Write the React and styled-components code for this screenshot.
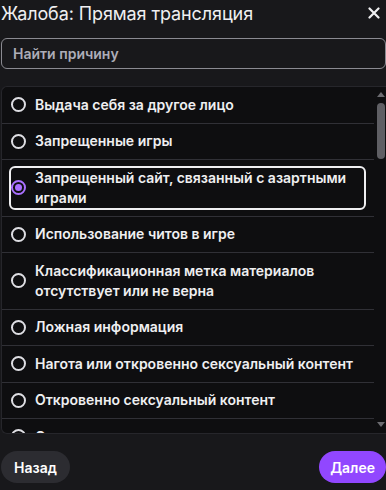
import React from "react";
import styled, { createGlobalStyle } from "styled-components";

const Global = createGlobalStyle`
  html, body { margin: 0; padding: 0; background: #18181b; overflow: hidden; }
  body { font-family: Inter, "Noto Sans", "Liberation Sans", sans-serif; color: #efeff1; }
  * { box-sizing: border-box; }
`;

const Dialog = styled.div`
  width: 386px;
  height: 490px;
  padding: 0 0 0 1px;
  display: flex;
  flex-direction: column;
  background: #18181b;
`;

const Header = styled.div`
  height: 26px;
  display: flex;
  align-items: center;
  justify-content: space-between;
  padding-right: 4px;
`;

const Title = styled.h2`
  margin: 0;
  font-size: 18px;
  font-weight: 400;
  color: #efeff1;
  letter-spacing: -0.1px;
`;

const CloseBtn = styled.button`
  width: 16px;
  height: 16px;
  padding: 0;
  border: 0;
  background: none;
  display: flex;
  align-items: center;
  justify-content: center;
  color: #efeff1;
`;

const Search = styled.input`
  margin-top: 12px;
  height: 31px;
  width: 100%;
  border: 1px solid #8a8a91;
  border-radius: 6px;
  background: #18181b;
  padding: 0 11px;
  font-family: inherit;
  font-size: 14px;
  font-weight: 600;
  color: #efeff1;
  outline: none;
  &::placeholder { color: #adadb8; }
`;

const List = styled.div`
  margin-top: 17px;
  height: 348px;
  display: flex;
  background: #0e0e10;
  border: 1px solid #26262b;
  border-right: 0;
  border-radius: 6px 0 0 6px;
  overflow: hidden;
`;

const Items = styled.div`
  flex: 1;
  overflow: hidden;
`;

const Row = styled.div`
  padding: 5.5px 8px 6px 7px;
  border-bottom: 1px solid #303036;
`;

const Label = styled.label`
  display: flex;
  align-items: center;
  gap: 9px;
  border: 2px solid ${(p) => (p.$selected ? "#efeff1" : "transparent")};
  border-radius: 6px;
  font-size: 14px;
  font-weight: 600;
  line-height: 20px;
  color: #efeff1;
`;

const Radio = styled.span`
  flex: none;
  width: 15px;
  height: 15px;
  border-radius: 50%;
  border: 2px solid ${(p) => (p.$checked ? "#a970ff" : "#dedee3")};
  display: flex;
  align-items: center;
  justify-content: center;
  &::after {
    content: "";
    width: 7px;
    height: 7px;
    border-radius: 50%;
    background: ${(p) => (p.$checked ? "#a970ff" : "transparent")};
  }
`;

const Track = styled.div`
  width: 12px;
  flex: none;
  display: flex;
  flex-direction: column;
  align-items: center;
  padding: 5px 0 6px 1px;
`;

const Arrow = styled.div`
  width: 0;
  height: 0;
  border-left: 4px solid transparent;
  border-right: 4px solid transparent;
  ${(p) =>
    p.$down
      ? "border-top: 5px solid #6b6b70;"
      : "border-bottom: 5px solid #6b6b70;"}
`;

const Thumb = styled.div`
  margin-top: 6px;
  width: 8px;
  height: 56px;
  border-radius: 4px;
  background: #5f5f64;
`;

const Spacer = styled.div`
  flex: 1;
`;

const Footer = styled.div`
  margin-top: 17px;
  display: flex;
  justify-content: space-between;
`;

const Button = styled.button`
  height: 32px;
  padding: 0 ${(p) => (p.$primary ? "11px" : "13px")};
  border: 0;
  border-radius: 16px;
  background: ${(p) => (p.$primary ? "#9147ff" : "#2c2c31")};
  color: #fff;
  font-family: inherit;
  font-size: 14px;
  font-weight: 600;
  white-space: nowrap;
`;

const reasons = [
  "Выдача себя за другое лицо",
  "Запрещенные игры",
  "Запрещенный сайт, связанный с азартными играми",
  "Использование читов в игре",
  "Классификационная метка материалов отсутствует или не верна",
  "Ложная информация",
  "Нагота или откровенно сексуальный контент",
  "Откровенно сексуальный контент",
  "Сексуальное насилие",
  "Спам",
];

export default function App() {
  const selected = 2;
  return (
    <>
      <Global />
      <Dialog>
        <Header>
          <Title>Жалоба: Прямая трансляция</Title>
          <CloseBtn aria-label="Закрыть">
            <svg width="12" height="12" viewBox="0 0 12 12">
              <path d="M1.5 1.5 L10.5 10.5 M10.5 1.5 L1.5 10.5" stroke="#efeff1" strokeWidth="2.2" strokeLinecap="round" />
            </svg>
          </CloseBtn>
        </Header>
        <Search placeholder="Найти причину" />
        <List>
          <Items>
            {reasons.map((r, i) => (
              <Row key={r}>
                <Label $selected={i === selected}>
                  <Radio $checked={i === selected} />
                  <span>{r}</span>
                </Label>
              </Row>
            ))}
          </Items>
          <Track>
            <Arrow />
            <Thumb />
            <Spacer />
            <Arrow $down />
          </Track>
        </List>
        <Footer>
          <Button>Назад</Button>
          <Button $primary>Далее</Button>
        </Footer>
      </Dialog>
    </>
  );
}
